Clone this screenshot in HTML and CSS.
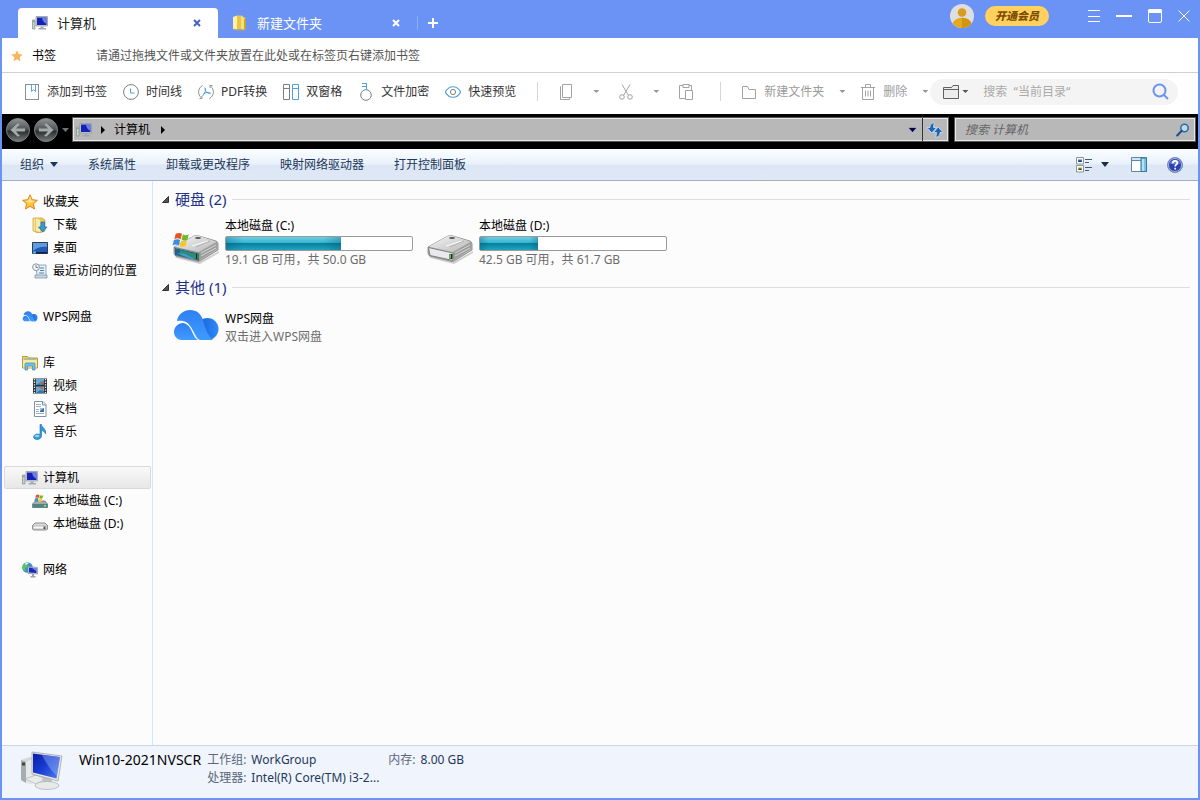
FILE: index.html
```html
<!DOCTYPE html>
<html lang="zh-CN">
<head>
  <meta charset="UTF-8" />
  <meta name="viewport" content="width=device-width, initial-scale=1" />
  <title>计算机</title>
  <link rel="stylesheet" href="styles.css">
</head>
<body>
  <header class="titlebar">
    <div class="tab active">
      <svg class="icon"><use href="#computer" /></svg>
      <a href="#computer-tab">计算机</a>
      <button class="tab-close" aria-label="关闭标签">
        <svg width="8" height="8" viewBox="0 0 8 8"><path d="M1 1l6 6M7 1L1 7" stroke="currentColor" stroke-width="2" /></svg>
      </button>
    </div>
    <div class="tab">
      <svg class="icon" viewBox="0 0 16 16">
        <path d="M1 2l4-1.500V15l-4-1z" fill="#fdf0a8" />
        <path d="M5 .5h5v13.500H5z" fill="#e9c545" />
        <path d="M9 .5l4 2.500v12l-4-1z" fill="#f7de7a" />
        <path d="M12 4l2-1v11l-2 1z" fill="#c9a530" />
        <path d="M2 14l4 1h7" stroke="#d2ae3c" fill="none" />
      </svg>
      <a href="#folder-tab">新建文件夹</a>
      <button class="tab-close" aria-label="关闭标签">
        <svg width="8" height="8" viewBox="0 0 8 8"><path d="M1 1l6 6M7 1L1 7" stroke="currentColor" stroke-width="2" /></svg>
      </button>
    </div>
    <button class="tab-add" aria-label="新建标签">
      <svg width="10" height="10" viewBox="0 0 10 10"><path d="M5 0v10M0 5h10" stroke="#fff" stroke-width="2" /></svg>
    </button>
    <div class="account">
      <button aria-label="账户">
        <svg width="24" height="24" viewBox="0 0 24 24">
          <defs><clipPath id="avatar"><circle cx="12" cy="12" r="12" /></clipPath></defs>
          <circle cx="12" cy="12" r="12" fill="#dedede" />
          <g clip-path="url(#avatar)"><circle cx="12" cy="8.500" r="4.300" fill="#d99c1c" /><ellipse cx="12" cy="20.500" rx="9.500" ry="6.800" fill="#e6a81f" /><path d="M12 13.700c5 0 9.500 3 9.500 7V24H12z" fill="#d29413" /></g>
        </svg>
      </button>
      <button class="vip">开通会员</button>
    </div>
    <div class="window-buttons">
      <button aria-label="菜单"><svg width="12" height="14" viewBox="0 0 12 14"><path d="M0 1.500h12M0 7.500h12M0 12.500h12" stroke="#fff" /></svg></button>
      <button aria-label="最小化"><svg width="16" height="14" viewBox="0 0 16 14"><path d="M0 7h16" stroke="#fff" stroke-width="2" /></svg></button>
      <button aria-label="最大化"><svg width="14" height="14" viewBox="0 0 14 14"><rect x=".5" y=".5" width="13" height="13" rx="1.500" fill="none" stroke="#fff" /><path d="M0 1.500Q0 0 1.500 0h11Q14 0 14 1.500V4H0z" fill="#fff" /></svg></button>
      <button aria-label="关闭"><svg width="12" height="14" viewBox="0 0 12 14"><path d="M.5 1.500l11 11M11.500 1.500l-11 11" stroke="#fff" /></svg></button>
    </div>
  </header>

  <div class="bookmarks">
    <svg width="12" height="12" viewBox="0 0 12 12"><path d="M6 .3l1.700 3.700 4 .5-3 2.700.8 4L6 9.200l-3.500 2 .8-4-3-2.700 4-.5z" fill="#f9b45c" /></svg>
    <strong>书签</strong>
    <span>请通过拖拽文件或文件夹放置在此处或在标签页右键添加书签</span>
  </div>

  <div class="toolbar">
    <div class="tools">
      <button><svg class="icon" viewBox="0 0 16 16" fill="none"><rect x="1.500" y=".5" width="13" height="15" stroke="#8b8f96" /><path d="M7.500 1v6.500l2-1.700 2 1.700V1" stroke="#5aa7dc" /></svg>添加到书签</button>
      <button><svg class="icon" viewBox="0 0 16 16" fill="none"><circle cx="8" cy="8" r="7.400" stroke="#7c8086" /><path d="M7.500 4.500v4.500h4" stroke="#4fa0dc" /></svg>时间线</button>
      <button><svg class="icon" viewBox="0 0 16 16" fill="none"><path d="M4.500 1.500A7.500 7.500 0 0 0 3.500 14M1.500 14.500H4V12M11.500 14.500A7.500 7.500 0 0 0 12.500 2M14.500 1.500H12V4" stroke="#8b8f96" /><path d="M6.500 4c2 0 1 5-2 8M7 4.500c0 3 2 5 5.500 5M5.500 10c2-1.500 4-2 7-.8" stroke="#4fa0dc" /></svg>PDF转换</button>
      <button><svg class="icon" viewBox="0 0 16 16" fill="none"><path d="M.5 .5h6v15h-6zM.5 4.500h6" stroke="#7c8086" /><path d="M9.500 .5h6v15h-6zM9.500 4.500h6" stroke="#4fa0dc" /></svg>双窗格</button>
      <button><svg class="key" viewBox="0 0 16 18" fill="none"><circle cx="8" cy="12" r="5.300" stroke="#7c8086" /><path d="M8.500 6.500V0M8 .5H4M8 3.500H4" stroke="#4fa0dc" /></svg>文件加密</button>
      <button><svg class="icon" viewBox="0 0 16 16" fill="none"><path d="M.3 8c4-7 11.400-7 15.400 0-4 7-11.400 7-15.400 0z" stroke="#4fa0dc" stroke-width="1.200" /><circle cx="8" cy="8" r="2.600" stroke="#7c8086" /></svg>快速预览</button>
    </div>
    <div class="tools edit">
      <button aria-label="复制"><svg class="icon" viewBox="0 0 16 16" fill="none"><path d="M4.500 .5h9v13h-9zM3 2.500h-.5v13h9V14" stroke="#a2a2a2" /></svg></button>
      <button class="drop" aria-label="复制选项"></button>
      <button aria-label="剪切"><svg class="icon" viewBox="0 0 16 16" fill="none" stroke="#a2a2a2"><path d="M4 .5l6.500 11M12 .5L5.500 11.500" /><circle cx="4" cy="13" r="2.300" /><circle cx="12" cy="13" r="2.300" /></svg></button>
      <button class="drop" aria-label="剪切选项"></button>
      <button aria-label="粘贴"><svg class="icon" viewBox="0 0 16 16" fill="none" stroke="#a2a2a2"><path d="M7 14.500H1.500v-13H5M11 1.500h2.500V6M5 .5h6v3H5zM7.500 6.500h7v9h-7z" /></svg></button>
    </div>
    <div class="tools manage">
      <button><svg class="icon" viewBox="0 0 16 16" fill="none" stroke="#a2a2a2"><path d="M1.500 2.500h5l1.500 3h6.500v9h-13z" /></svg>新建文件夹</button>
      <button class="drop" aria-label="新建选项"></button>
      <button><svg class="icon" viewBox="0 0 16 16" fill="none" stroke="#a2a2a2"><path d="M1 3.500h14M5.500 3V.5h5V3M2.500 4v11.500h11V4M5.500 6.500v6M8 6.500v6M10.500 6.500v6" /></svg>删除</button>
      <button class="drop" aria-label="删除选项"></button>
    </div>
    <form class="finder">
      <button type="button" class="scope" aria-label="搜索范围">
        <svg class="icon" viewBox="0 0 16 16"><path d="M.5 3.500h8l1.500-2h5.500v13H.5z" fill="#ececec" stroke="#626262" /><path d="M.5 5.500h15" stroke="#626262" /></svg>
        <i class="drop"></i>
      </button>
      <input type="text" aria-label="搜索当前目录" placeholder="搜索  “当前目录“">
      <button aria-label="搜索"><svg width="17" height="17" viewBox="0 0 17 17" fill="none" stroke="#6b93f5" stroke-width="2"><circle cx="7.500" cy="7.500" r="6" /><path d="M12 12l4 4" /></svg></button>
    </form>
  </div>

  <div class="navigation">
    <button class="round" aria-label="后退"><svg width="24" height="26" viewBox="0 0 24 26"><use href="#orb" /><path d="M4.500 13l7-6.500 2.500.5-4 4.500h9v3h-9l4 4.500-2.500.5z" fill="#a4a9a9" /></svg></button>
    <button class="round" aria-label="前进"><svg width="24" height="26" viewBox="0 0 24 26"><use href="#orb" /><path d="M19.500 13l-7-6.500-2.500.5 4 4.500H5v3h9l-4 4.500 2.500.5z" fill="#a4a9a9" /></svg></button>
    <button class="history" aria-label="最近页面"><svg width="7" height="4" viewBox="0 0 7 4"><path d="M0 0h7L3.500 4z" fill="#6f7373" /></svg></button>
    <div class="address">
      <svg class="icon"><use href="#computer" /></svg>
      <svg class="crumb" width="5" height="8" viewBox="0 0 5 8"><path d="M1 0l4 4-4 4z" /></svg>
      <a href="#computer-tab">计算机</a>
      <svg class="crumb" width="5" height="8" viewBox="0 0 5 8"><path d="M1 0l4 4-4 4z" /></svg>
      <button class="address-list" aria-label="地址列表"><svg width="9" height="6" viewBox="0 0 9 6"><path d="M0 .5h9L4.500 5.500z" fill="#000048" stroke="#e3e3e3" stroke-width=".5" /></svg></button>
      <button class="refresh" aria-label="刷新"><svg width="16" height="16" viewBox="0 0 16 16"><path d="M7.500 1C4 1 3 3 3 5.500H0L4.800 11 9.500 5.500H6.500C6.500 3.500 7 2 7.500 1z" fill="#1f65b5" stroke="#d9edfb" stroke-width=".7" /><path d="M8.500 15c3.500 0 4.500-2 4.500-4.500h3L11.200 5 6.500 10.500h3c0 2-.5 3.500-1 4.500z" fill="#1f65b5" stroke="#d9edfb" stroke-width=".7" /></svg></button>
    </div>
    <form class="locate">
      <input type="text" aria-label="搜索计算机" placeholder="搜索 计算机">
      <button aria-label="搜索"><svg width="14" height="14" viewBox="0 0 14 14"><circle cx="8.500" cy="5" r="3.700" fill="#bcdcee" stroke="#2f6b9f" stroke-width="1.500" /><path d="M5.700 7.800L1.200 12.500" stroke="#1d4b84" stroke-width="2" stroke-linecap="round" /></svg></button>
    </form>
  </div>

  <div class="commands">
    <button>组织<svg width="8" height="5" viewBox="0 0 8 5"><path d="M0 0h8L4 5z" fill="#1c3656" /></svg></button>
    <button>系统属性</button>
    <button>卸载或更改程序</button>
    <button>映射网络驱动器</button>
    <button>打开控制面板</button>
    <div class="views">
      <button aria-label="更改视图">
        <svg width="16" height="16" viewBox="0 0 16 16"><path d="M.5 .5h7v6.500h-7zM.5 8.500h7V15h-7z" fill="#fff" stroke="#8d949c" /><path d="M2 2.500h4V5H2z" fill="#3d76a8" /><path d="M2 5l2-1.500L6 5z" fill="#123a5e" /><path d="M2 10.500h4V13H2z" fill="#b9a43c" /><path d="M2 13l2-2 2 2z" fill="#31531f" /><path d="M9 2.500h7M9 5.500h4M9 10.500h7M9 13.500h4" stroke="#3e5c82" /></svg>
        <svg width="8" height="5" viewBox="0 0 8 5"><path d="M0 0h8L4 5z" fill="#1c2c44" /></svg>
      </button>
      <button aria-label="预览窗格"><svg width="16" height="15" viewBox="0 0 16 15"><path d="M.5 .5h15v14H.5z" fill="#fff" stroke="#5d87a8" /><path d="M1 1h14v2H1z" fill="#cfe3f1" /><path d="M1 3.500h9" stroke="#5d87a8" /><path d="M10 1h5.500v13.500H10z" fill="#7cc3df" stroke="#35749c" /><path d="M11 2h2v12h-2z" fill="#b5e2f1" /></svg></button>
      <button aria-label="帮助"><svg width="16" height="16" viewBox="0 0 16 16"><circle cx="8" cy="8" r="7.500" fill="#2a42ad" stroke="#7d8bb5" /><circle cx="8" cy="8" r="6.500" fill="none" stroke="#c8d1f0" stroke-width=".8" /><path d="M3 6.500a5.200 5.200 0 0 1 10 0q-5 2-10 0z" fill="#6f86dc" /><path d="M5.800 6.300C5.800 3 10.300 3.300 10.300 6c0 1.700-2.100 1.700-2.100 3.500M8.200 10.800v1.800" fill="none" stroke="#fff" stroke-width="1.700" /></svg></button>
    </div>
  </div>

  <div class="content">
    <nav class="sidebar">
      <ul>
        <li><a href="#favorites"><svg class="icon" viewBox="0 0 16 16"><path d="M8 .8l2.100 4.900 5.300.6-4 3.500 1.200 5.200L8 12.300 3.400 15l1.200-5.200-4-3.500 5.300-.6z" fill="#ffc43d" stroke="#d9781e" stroke-width=".9" /><path d="M8 2.500l1.500 4 4 .5L8 9 3 7l3.500-.5z" fill="#ffe58a" /></svg>收藏夹</a></li>
        <li class="child"><a href="#downloads"><svg class="icon" viewBox="0 0 16 16"><path d="M1 1h4v14l-4-1z" fill="#f8e290" stroke="#c79f3a" stroke-width=".7" /><path d="M4 1h6l3 2v11l-4 1.500H4z" fill="#ecca5a" stroke="#c79f3a" stroke-width=".7" /><path d="M4 1l4 2v12l-4-1z" fill="#f9e9a9" /><path d="M9 5h3.500v5H15l-4.200 5L6.500 10H9z" fill="#2f9bdf" stroke="#1a69ae" stroke-width=".7" /></svg>下载</a></li>
        <li class="child"><a href="#desktop"><svg class="icon" viewBox="0 0 16 16"><path d="M.5 2.500h15v11H.5z" fill="#225bb4" stroke="#2f3d56" /><path d="M1 3h14v4Q7 6 1 11z" fill="#5f9be0" /><path d="M1 12h14v1.500H1z" fill="#17243d" /><path d="M1 11.500h3v2H1z" fill="#55b7e4" /></svg>桌面</a></li>
        <li class="child"><a href="#recent"><svg class="icon" viewBox="0 0 16 16"><path d="M4 2h10v11H5z" fill="#e6eef5" stroke="#8297a8" stroke-width=".8" /><path d="M3 12h12v3H3z" fill="#cbd7e0" stroke="#8297a8" stroke-width=".8" /><path d="M8 5h4M8 7.500h4M7 10h5" stroke="#4e85b5" /><circle cx="4" cy="4.200" r="3.400" fill="#f4f6f7" stroke="#8a949c" /><path d="M4 2v2.500h2" fill="none" stroke="#5d6872" stroke-width=".8" /></svg>最近访问的位置</a></li>
      </ul>
      <ul>
        <li><a href="#wps"><svg class="icon" viewBox="0 0 48 40"><use href="#cloud" width="48" height="40" /></svg>WPS网盘</a></li>
      </ul>
      <ul>
        <li><a href="#libraries"><svg class="icon" viewBox="0 0 16 16"><path d="M.5 1.500h5l1 1.500h9v10H.5z" fill="#ecd06a" stroke="#bd9937" /><path d="M1 5h14v7.500H1z" fill="#f9e9a2" /><path d="M2 4h12" stroke="#66b2d8" /><path d="M3 15V9q0-1 1-1h8q1 0 1 1v6h-2.500v-4h-5v4z" fill="#74c0e6" stroke="#3687b8" stroke-width=".7" /></svg>库</a></li>
        <li class="child"><a href="#videos"><svg class="icon" viewBox="0 0 16 16"><path d="M1 .5h14v15H1z" fill="#283038" /><path d="M4 1h8v6H4zM4 8.500h8V15H4z" fill="#65add7" /><path d="M4 7l8-4v4zM4 15l4-3 4 1v2z" fill="#327ba7" /><path d="M8 3l4 2-4 2zM7 9l4-.5V13z" fill="#bd6a50" /><path d="M2.500 1v14M13.500 1v14" stroke="#f2f2f2" stroke-width="1.300" stroke-dasharray="1.300 1.300" /></svg>视频</a></li>
        <li class="child"><a href="#documents"><svg class="icon" viewBox="0 0 16 16"><path d="M2.500 .5h8.500l3 3v12H2.500z" fill="#fff" stroke="#7f92a5" /><path d="M10.500 .5V4h3.500" fill="#dbe6ef" stroke="#7f92a5" /><path d="M4 3.500h5M4 5.500h5M4 8.500h3M4 10.500h3M4 12.500h8" stroke="#9bb2c7" /><path d="M8 7h4v4H8z" fill="#3e6ea6" /><path d="M8 7h4l-4 3z" fill="#9bc0e3" /></svg>文档</a></li>
        <li class="child"><a href="#music"><svg class="icon" viewBox="0 0 16 16"><path d="M8 .5h1.500C10 4 14.500 4.500 13.500 10c-1-2.500-2-3-4-3.500V12c0 2-2 3.500-4.500 3.500C.5 15.500.5 10.500 5 10c1.200-.1 2 0 3 .6z" fill="#2e9bde" stroke="#1b6da8" stroke-width=".6" /><ellipse cx="5" cy="12" rx="2.500" ry="1.200" fill="#86d1f5" /></svg>音乐</a></li>
      </ul>
      <ul>
        <li class="selected"><a href="#computer-tab"><svg class="icon"><use href="#computer" /></svg>计算机</a></li>
        <li class="child"><a href="#drive-c"><svg class="icon" viewBox="0 0 16 16"><path d="M.5 11l3-3h9.500l2.500 3v3.500H.5z" fill="#a5aaae" stroke="#5f666b" stroke-width=".7" /><path d="M1 11h14.500v3.500H1z" fill="#4c8783" /><path d="M12 12h2v1.500h-2z" fill="#8fee72" /><g transform="translate(2 0) scale(.55)"><use href="#flag" width="48" height="34" /></g></svg>本地磁盘 (C:)</a></li>
        <li class="child"><a href="#drive-d"><svg class="icon" viewBox="0 0 16 16"><path d="M.5 9.500L3 7h10l2.500 2.500V13l-1 1H1.500l-1-1z" fill="#dcdcdc" stroke="#777" stroke-width=".8" /><path d="M1 10h14v3H1z" fill="#f7f7f7" stroke="#999" stroke-width=".6" /><path d="M11.500 10.500h2V13h-2z" fill="#4a5a4a" /></svg>本地磁盘 (D:)</a></li>
      </ul>
      <ul>
        <li><a href="#network"><svg class="icon" viewBox="0 0 16 16"><circle cx="5.500" cy="5.500" r="5.300" fill="#3d8fd8" /><path d="M1 3.500C3 0 6 0 7 1L5 3l1 2-3 1 1 3C1 9 0 6 1 3.500z" fill="#62c64a" /><path d="M3 1.500q2-1.500 4-.5L4 3z" fill="#d7f2ff" /><path d="M6 4.500l9.500 1V12L6 11.500z" fill="#c7d0d9" stroke="#7b858f" stroke-width=".6" /><path d="M7 5.500l7.500.8v4.700L7 10.500z" fill="#1b28c0" /><path d="M10 6l4.500.3v3z" fill="#7390f0" /><path d="M10 12h2v2h1.500v1.500h-5V14H10z" fill="#9ba4ad" /></svg>网络</a></li>
      </ul>
    </nav>

    <main class="files">
      <section>
        <h2><svg width="7" height="7" viewBox="0 0 7 7"><path d="M6.500 .5v6h-6z" fill="#555" stroke="#333" /></svg>硬盘 (2)</h2>
        <div class="tiles">
          <a class="tile" href="#drive-c">
            <svg width="48" height="34" viewBox="0 0 48 34">
              <use href="#drive" />
              <path d="M3 18l24 5.500v7L3 25z" fill="#1e6486" /><path d="M8 20l16 4v5L8 25z" fill="#308c78" /><path d="M4 23l9 1 10 5-1 1z" fill="#3c9fd0" /><path d="M24 24h3v5h-3z" fill="#1a2d1c" /><path d="M26 24v5" stroke="#57d64f" />
              <use href="#flag" />
            </svg>
            <div class="info">
              <span class="name">本地磁盘 (C:)</span>
              <div class="bar"><div class="fill" style="width: 62%"></div></div>
              <span class="note">19.1 GB 可用，共 50.0 GB</span>
            </div>
          </a>
          <a class="tile" href="#drive-d">
            <svg width="48" height="34" viewBox="0 0 48 34"><use href="#drive" /></svg>
            <div class="info">
              <span class="name">本地磁盘 (D:)</span>
              <div class="bar"><div class="fill" style="width: 31%"></div></div>
              <span class="note">42.5 GB 可用，共 61.7 GB</span>
            </div>
          </a>
        </div>
      </section>
      <section>
        <h2><svg width="7" height="7" viewBox="0 0 7 7"><path d="M6.500 .5v6h-6z" fill="#555" stroke="#333" /></svg>其他 (1)</h2>
        <div class="tiles">
          <a class="tile cloud-tile" href="#wps">
            <svg width="48" height="40" viewBox="0 0 48 40"><use href="#cloud" /></svg>
            <div class="info">
              <span class="name">WPS网盘</span>
              <span class="note">双击进入WPS网盘</span>
            </div>
          </a>
        </div>
      </section>
    </main>
  </div>

  <footer class="details">
    <svg width="44" height="40" viewBox="0 0 44 40">
      <path d="M1 9l9-3 7 2v22l-7 3-9-4z" fill="#d3d7d8" /><path d="M1 9l5 2v21l-5-3z" fill="#a7adaf" /><path d="M6 11l7-3v24l-4 1-3-1z" fill="#e6e8e9" /><path d="M2 13h3" stroke="#3c4648" stroke-width="3" />
      <path d="M5 28l11-4 10 4-10 5z" fill="#e9ebeb" stroke="#a5a9ab" stroke-width=".6" />
      <path d="M22 25l10 2v7h-9z" fill="#bfc3c4" />
      <ellipse cx="27" cy="34.500" rx="12" ry="4" fill="#e8eaea" stroke="#a9adaf" stroke-width=".7" />
      <path d="M12 1l30 4-4 25-26-7z" fill="#e5e8e9" stroke="#9fa5a8" stroke-width=".8" />
      <path d="M13 2.500l27 3.500-3.500 21.500L13 21.500z" fill="url(#screen)" />
      <path d="M22 4l18 2-3 19q-8-7-15-21z" fill="#aac6ff" opacity=".4" />
    </svg>
    <h1>Win10-2021NVSCR</h1>
    <dl>
      <dt>工作组:</dt><dd>WorkGroup</dd>
      <dt>内存:</dt><dd>8.00 GB</dd>
      <dt>处理器:</dt><dd>Intel(R) Core(TM) i3-2...</dd>
    </dl>
  </footer>

  <!-- shared icons -->
  <svg width="0" height="0" aria-hidden="true">
    <defs>
      <linearGradient id="screen" x1="0" y1="0" x2="1" y2="1"><stop offset="0" stop-color="#0a1fa6" /><stop offset=".45" stop-color="#1639cf" /><stop offset="1" stop-color="#4f7ff0" /></linearGradient>
      <linearGradient id="sky" x1="0" y1="0" x2="0" y2="1"><stop offset="0" stop-color="#2f80f3" /><stop offset="1" stop-color="#3f9bfd" /></linearGradient>
      <linearGradient id="deep" x1="0" y1="0" x2="1" y2="0"><stop offset="0" stop-color="#145bd8" /><stop offset="1" stop-color="#2f8bf7" /></linearGradient>
      <linearGradient id="metal" x1="0" y1="0" x2="0" y2="1"><stop offset="0" stop-color="#8f9494" /><stop offset=".5" stop-color="#4d5151" /><stop offset=".55" stop-color="#292c2c" /><stop offset="1" stop-color="#757b7b" /></linearGradient>
      <linearGradient id="steel" x1="0" y1="0" x2="1" y2="1"><stop offset="0" stop-color="#f7f7f7" /><stop offset="1" stop-color="#b7b7b7" /></linearGradient>
    </defs>
    <symbol id="computer" viewBox="0 0 16 16">
      <path d="M.5 5h2.500v9H.5z" fill="#c9d2cf" stroke="#7e8a88" stroke-width=".7" /><path d="M1 6.500h1.500" stroke="#5bb53f" />
      <path d="M4 1.500h11.500v9.500H4z" fill="#cfd3dc" stroke="#8b919b" stroke-width=".7" />
      <path d="M5 2.500h9.500V10H5z" fill="#1520b5" /><path d="M10 2.500h4.500V9q-4-2-4.500-6.500z" fill="#6680e8" />
      <path d="M8.500 11.500h3V13H14v1.500H6.500V13h2z" fill="#a3a9b0" />
    </symbol>
    <symbol id="orb" viewBox="0 0 24 26"><circle cx="12" cy="13" r="11.500" fill="url(#metal)" stroke="#7c8181" /></symbol>
    <symbol id="cloud" viewBox="0 0 48 40">
      <circle cx="35.500" cy="22" r="11" fill="url(#deep)" />
      <path d="M5 14C6 7 12 3 18 3c7 0 11 4 13 10 2 7 4 15 10 20H28C22 31 21 16 11 14c-2-.4-4-.3-6 0z" fill="url(#sky)" />
      <path d="M11 16c9 1 9 14 15 17H11C-1 33-1 17 11 16z" fill="url(#sky)" />
    </symbol>
    <symbol id="drive" viewBox="0 0 48 34">
      <path d="M3 26l24 6 20-11v2L28 34 4 28z" fill="#000" opacity=".18" />
      <path d="M2 17L22 6q2-1 5 0l17 5q2 1 2 3v6L28 31q-2 1-4 0L4 26q-2-1-2-3z" fill="#bebebe" stroke="#7c7c7c" stroke-width=".8" />
      <path d="M3 16.500L22 6q2-1 5 0l17 5.500L27 22z" fill="url(#steel)" />
      <path d="M27 22l18-10v7L28 30z" fill="#9d9d9d" /><path d="M29 23l15-8M29 26l15-8" stroke="#d6d6d6" />
      <path d="M2.500 17.500L27 23v7.500L4 25.500z" fill="#e9e9ee" stroke="#777" stroke-width=".9" />
      <ellipse cx="26" cy="8" rx="3" ry="1" fill="#555" /><path d="M20 16l16-5" stroke="#fff" /><path d="M24 17l14-6" stroke="#999" stroke-width=".6" />
      <path d="M23.500 24h3v5h-3z" fill="#163018" /><path d="M24.500 24.500v4" stroke="#4fd349" />
    </symbol>
    <symbol id="flag" viewBox="0 0 48 34">
      <g transform="translate(1 2) scale(.9)">
        <path d="M3 2q4-2 7 0L8.500 8q-4-2-7 0z" fill="#e85425" /><path d="M11 2.500q3 2 6.500 0L16 8.500q-4 2-6.500 0z" fill="#74b829" />
        <path d="M1 9q4-2 7 0l-1.500 6Q3 13-.5 15z" fill="#3b8de0" /><path d="M9 9.500q4 2 6.500 0L14 15.500q-4 2-6.500 0z" fill="#fac624" />
      </g>
    </symbol>
  </svg>
</body>
</html>
```
FILE: styles.css
```css
* {
  margin: 0;
  padding: 0;
  box-sizing: border-box;
}

body {
  display: flex;
  flex-direction: column;
  min-height: 100vh;
  border: 2px solid #6b93f5;
  border-top: none;
  background-color: #fcfcfc;
  color: #000;
  font-family: 'Noto Sans', 'Noto Sans CJK SC', sans-serif;
  font-size: 12px;
  line-height: 18px;
}

button,
input {
  font: inherit;
  color: inherit;
  background: none;
  border: none;
  outline: none;
}

button {
  display: flex;
  align-items: center;
  white-space: nowrap;
  cursor: pointer;
}

a {
  color: inherit;
  text-decoration: none;
}

svg {
  display: block;
  flex-shrink: 0;
}

.icon {
  width: 16px;
  height: 16px;
}

/* Title bar */
.titlebar {
  display: flex;
  height: 38px;
  padding: 0 8px 0 16px;
  background-color: #6b93f5;
}

.tab {
  display: flex;
  align-items: center;
  gap: 9px;
  width: 199px;
  height: 30px;
  margin-top: 8px;
  padding: 0 17px 0 14px;
  border-radius: 4px 4px 0 0;
  color: #fff;
  font-size: 13px;
}

.tab.active {
  width: 200px;
  background-color: #fff;
  color: #222;
}

.tab-close {
  margin-left: auto;
}

.active .tab-close {
  color: #4263c4;
}

.tab-add {
  height: 14px;
  margin-top: 16px;
  padding-left: 10px;
  border-left: 1px solid #8fadf5;
}

.account,
.window-buttons {
  display: flex;
  align-items: center;
  height: 32px;
}

.account {
  gap: 11px;
  margin-left: auto;
}

.vip {
  height: 20px;
  padding: 0 10px;
  border-radius: 10px;
  background-color: #ffd25f;
  color: #7d4e00;
  font-size: 11px;
  font-weight: 900;
  font-style: italic;
}

.window-buttons {
  gap: 16px;
  margin-left: 39px;
}

/* Bookmarks */
.bookmarks {
  display: flex;
  align-items: center;
  height: 35px;
  padding: 1px 9px 0;
  background-color: #fff;
  border-bottom: 1px solid #d0d0d0;
  color: #555;
}

.bookmarks strong {
  margin: 0 40px 0 9px;
  color: #000;
  font-weight: normal;
}

/* Toolbar */
.toolbar {
  display: flex;
  align-items: center;
  height: 41px;
  padding: 0 20px 4px 22px;
  background-color: #fff;
  color: #333;
}

.tools {
  display: flex;
  align-items: center;
  gap: 16px;
}

.tools button {
  gap: 7px;
}

.key {
  width: 16px;
  height: 18px;
}

.edit,
.manage {
  height: 19px;
  margin-left: 20px;
  padding-left: 20px;
  border-left: 1px solid #d6d6d6;
  color: #9b9b9b;
}

.edit {
  gap: 19px;
  margin-left: 21px;
  padding-right: 6px;
}

.manage {
  gap: 15px;
}

.drop {
  width: 6px;
  height: 3px;
  background-color: #999;
  clip-path: polygon(0 0, 100% 0, 50% 100%);
}

.finder {
  display: flex;
  flex: 1;
  align-items: center;
  min-width: 0;
  height: 26px;
  margin-left: 2px;
  padding: 0 9px 0 13px;
  border-radius: 13px;
  background-color: #f4f4f4;
}

.scope {
  gap: 3px;
}

.scope .drop {
  background-color: #555;
}

.finder input {
  flex: 1;
  min-width: 0;
  padding-left: 15px;
}

.finder input::placeholder {
  color: #aaa;
  white-space: pre;
}

/* Navigation row */
.navigation {
  display: flex;
  align-items: center;
  height: 35px;
  padding: 0 2px 4px 4px;
  background-color: #000;
}

.round {
  margin-right: 4px;
}

.history {
  margin-right: 3px;
}

.address,
.locate {
  display: flex;
  align-items: center;
  height: 25px;
  border: 1px solid #555;
  background-color: #b8b8b8;
  box-shadow: inset 0 0 0 1px #e9e9e9;
}

.address {
  flex: 1;
  padding-left: 3px;
}

.address a {
  margin-right: 10px;
}

.crumb {
  margin: 0 9px 0 8px;
}

.crumb + a + .crumb {
  margin: 0;
}

.address-list {
  height: 23px;
  margin-left: auto;
  padding-right: 5px;
  border-right: 1px solid #333;
}

.refresh {
  padding: 0 5px 0 4px;
}

.locate {
  width: 242px;
  margin-left: 5px;
  padding: 0 5px 0 10px;
}

.locate input {
  flex: 1;
  min-width: 0;
}

.locate input::placeholder {
  color: #656565;
  font-style: italic;
}

/* Command bar */
.commands {
  display: flex;
  align-items: center;
  gap: 30px;
  height: 32px;
  padding: 0 15px 0 18px;
  background: linear-gradient(#fbfeff, #e9f1fb 48%, #dce6f4 52%, #dfe9f6);
  border-bottom: 1px solid #a0afc3;
  color: #1e395b;
}

.commands button {
  gap: 6px;
}

.views {
  display: flex;
  gap: 22px;
  margin-left: auto;
}

.views button:first-child {
  gap: 9px;
}

.views button:last-child {
  margin-left: -2px;
}

/* Content */
.content {
  display: flex;
  flex: 1;
}

.sidebar {
  display: flex;
  flex-direction: column;
  gap: 23px;
  width: 151px;
  padding: 9px 1px 9px 2px;
  border-right: 1px solid #d9e5f2;
}

.sidebar ul {
  list-style: none;
}

.sidebar a {
  display: flex;
  align-items: center;
  gap: 5px;
  height: 23px;
  padding-left: 18px;
  white-space: nowrap;
}

.sidebar .child a {
  padding-left: 28px;
}

.sidebar .selected a {
  padding-left: 17px;
  border: 1px solid #d9d9d9;
  border-radius: 2px;
  background: linear-gradient(#f9f9f9, #e7e7e7);
}

.files {
  flex: 1;
  padding: 8px 8px 8px 9px;
}

.files h2 {
  display: flex;
  align-items: center;
  gap: 6px;
  height: 20px;
  color: #1e3287;
  font-size: 15px;
  font-weight: normal;
}

.files h2::after {
  content: '';
  flex: 1;
  height: 1px;
  background-color: #dedede;
}

.tiles {
  display: flex;
  flex-wrap: wrap;
  gap: 13px;
  padding: 8px 0 8px 10px;
}

.tile {
  display: flex;
  gap: 5px;
}

.tile svg {
  margin-top: 13px;
}

.info {
  display: flex;
  flex-direction: column;
  width: 188px;
}

.note {
  color: #6d6d6d;
}

.bar {
  height: 15px;
  margin-top: 1px;
  border: 1px solid #9a9a9a;
  border-radius: 2px;
  background-color: #fff;
}

.fill {
  height: 100%;
  background:
    linear-gradient(90deg, rgba(0, 80, 110, 0.3), transparent 15%, transparent 85%, rgba(0, 80, 110, 0.3)),
    linear-gradient(#6cd0e4, #35b4d0 45%, #077f9d 50%, #21a5c2);
}

.cloud-tile {
  padding-top: 5px;
}

.cloud-tile svg {
  margin-top: -3px;
}

/* Details pane */
.details {
  display: flex;
  height: 53px;
  padding: 5px 18px;
  background-color: #f0f4fc;
  border-top: 1px solid #ccd6e4;
}

.details h1 {
  margin-left: 15px;
  font-size: 14px;
  font-weight: normal;
  line-height: 18px;
}

.details dl {
  display: grid;
  grid-template-columns: auto 132px auto auto;
  column-gap: 5px;
  align-content: start;
  margin-left: 6px;
}

.details dt {
  color: #5a6779;
}

.details dd {
  color: #1e395b;
  white-space: nowrap;
}
```
